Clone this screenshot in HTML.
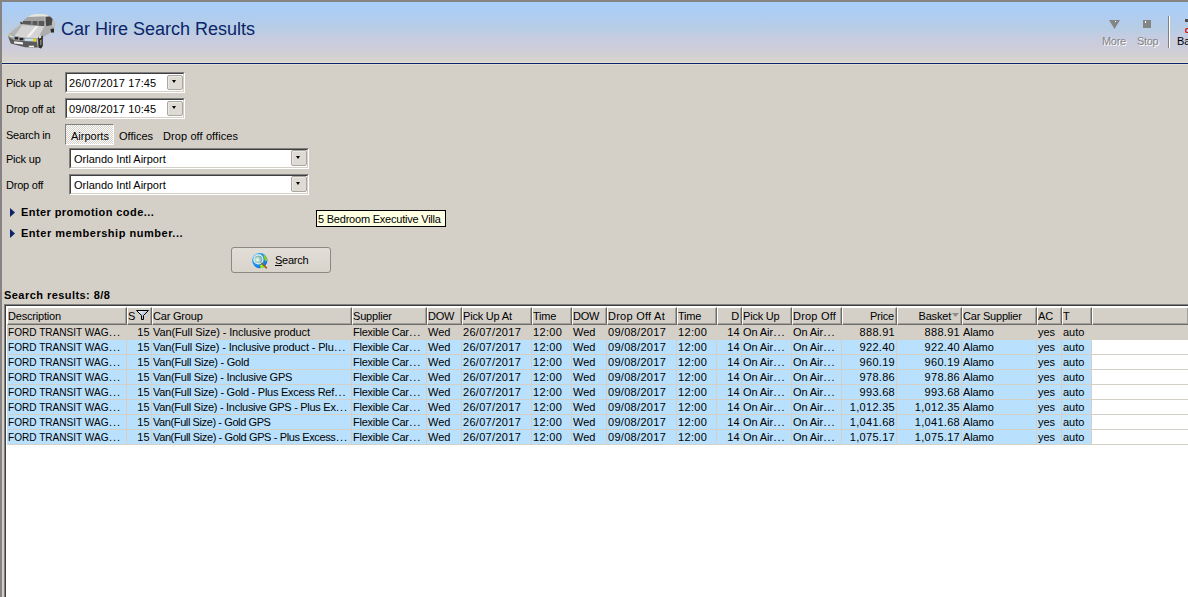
<!DOCTYPE html><html><head><meta charset="utf-8"><style>
*{margin:0;padding:0;box-sizing:border-box}
html,body{width:1188px;height:597px;overflow:hidden;background:#d4d0c8}
body{position:relative;font-family:"Liberation Sans",sans-serif;font-size:11px;color:#000}
.a{position:absolute;white-space:pre}
#hdr{position:absolute;left:2px;top:2px;width:1186px;height:60px;
 background:linear-gradient(#a8cefa 0%,#b0cdf0 25%,#b9cde3 47%,#c5cce2 58%,#cfcdd8 80%,#d8d4cc 100%)}
.lbl{position:absolute;white-space:pre;line-height:13px}
.box{position:absolute;background:#fff;border-top:1px solid #808080;border-left:1px solid #808080;border-right:1px solid #fff;border-bottom:1px solid #fff}
.box .in{position:absolute;left:0;top:0;right:0;bottom:0;border-top:1px solid #404040;border-left:1px solid #404040;border-right:1px solid #d4d0c8;border-bottom:1px solid #d4d0c8}
.dd{position:absolute;width:16px;height:15px;border-radius:2px;background:#dedad4;border:1px solid #aaa6a0;box-shadow:inset 1px 1px 0 #ece9e4}
.dd:after{content:"";position:absolute;left:4px;top:4px;border-left:2.5px solid transparent;border-right:2.5px solid transparent;border-top:3px solid #000}
.dd.tall:after{top:5px}
.hc{position:absolute;top:307px;height:18px;background:#d4d0c8;border-top:1px solid #fff;border-left:1px solid #fff;border-right:1px solid #6e6c66;border-bottom:1px solid #6e6c66;box-shadow:inset -1px -1px 0 #a3a19b;line-height:15px;padding-top:1px;white-space:pre;overflow:hidden;letter-spacing:-0.2px}
.c{position:absolute;height:14px;line-height:14px;white-space:pre;overflow:hidden;padding:0 1px}
.el{letter-spacing:0.95px;margin-left:0.5px}
</style></head><body>
<div id="hdr"></div>
<div class="a" style="left:0;top:0;width:1188px;height:2px;background:#878383"></div>
<div class="a" style="left:0;top:0;width:2px;height:597px;background:#878383"></div>
<div class="a" style="left:2px;top:62px;width:1186px;height:1px;background:#e4e0d8"></div>
<div class="a" style="left:2px;top:63px;width:1186px;height:1px;background:#0a246a"></div>
<div class="a" style="left:2px;top:64px;width:1186px;height:1px;background:#e2ded4"></div>
<svg class="a" style="left:5px;top:10px" width="55" height="42" viewBox="5 10 55 42">
<path d="M8.2 36.5 L9 34 L13 30.5 L18 26.5 L20.5 22.3 L22 22.5 L27.7 17 L31.2 15.1 L35 14.1 L43.9 14.1 L48.9 15.5 L52 17.5 L54 20 L55.5 23 L54.5 28.6 L54 32.4 L50.5 32.5 L44 36.5 L42.8 40 L42.5 47 L41 48.6 L38 48 L37.7 47.5 L25.2 47.2 L10.8 43.5 Z" fill="#bdbdbd"/>
<path d="M31.2 15.1 L35 14.1 L43.9 14.1 L48.9 15.5 L44.3 16.6 L27.7 17 Z" fill="#e6e6e0"/>
<path d="M24.2 19.7 L27.7 17 L44.3 16.6 L44.3 20.9 L23 21.5 Z" fill="#a4a4a4"/>
<path d="M21.9 24 L23 21 L44.3 20.9 L44.3 26.3 Z" fill="#585858"/>
<path d="M31 21 L33 21 L32.5 25.5 L30.5 25.4 Z" fill="#858585"/>
<path d="M37 21 L39 21 L38.8 25.9 L36.8 25.8 Z" fill="#858585"/>
<path d="M20 21.8 L21.5 22 L22.3 24 L21 24.2 Z" fill="#303030"/>
<path d="M45.5 17 L50 16.5 L52.5 19 L51.6 25.5 L46 26.3 Z" fill="#484848"/>
<path d="M44.3 26.3 L51.6 25.5 L54.5 28.6 L50.5 32.5 L44 36.5 L38 38 Z" fill="#adadad"/>
<path d="M9 34 L18 26.5 L22 25.5 L14.8 35.7 Z" fill="#b4b4b4"/>
<path d="M14.8 35.7 L22 25.5 L44.3 26.3 L38 38 L25.2 37.6 Z" fill="#d4d4d4"/>
<path d="M26 37.6 L35.8 26 L38.6 26.1 L29 37.7 Z" fill="#f2f2f2"/>
<path d="M14.8 35.7 L25.2 37.6 L38 38" stroke="#f4f4f4" stroke-width="0.9" fill="none"/>
<path d="M8.2 36.5 L9 34 L14.8 35.7 L25.2 37.6 L38 38 L37 42 L14.1 40.2 Z" fill="#9c9c9c"/>
<path d="M8.2 36.8 L14.1 40.2 L37 42 L37.7 47.5 L25.2 47.2 L10.8 43.5 Z" fill="#5a5a5a"/>
<path d="M10 35 L14.1 36.2 L14.1 37.6 L10 37 Z" fill="#c0e0f0"/>
<rect x="9" y="34" width="1.2" height="2" fill="#d8d050"/>
<rect x="14.8" y="37.2" width="3.4" height="2.2" fill="#202020"/>
<rect x="19.6" y="38" width="3.7" height="2.2" fill="#202020"/>
<rect x="24.8" y="38.7" width="8.5" height="2.2" fill="#c4e4f8"/>
<rect x="33.3" y="38.7" width="2.9" height="2.6" fill="#f0d800"/>
<path d="M14.1 41.3 L23 42.2 L23 44.6 L14.1 43.6 Z" fill="#f0f0f0"/>
<rect x="28.8" y="45.7" width="5.2" height="1.5" fill="#f0f0f0"/>
<path d="M38 37 L42.8 35.4 L42.8 46 L41 48.6 L38.5 47.5 Z" fill="#2c2c2c"/>
<path d="M38.6 36 L41.5 35.2 L41 38 L38.8 38.5 Z" fill="#e0e0e0"/>
<path d="M40 40 L41.6 39.5 L41.4 45 L40.2 45.5 Z" fill="#8a8a8a"/>
<path d="M50.5 29 L54 28.6 L54 32.4 L51 32.5 Z" fill="#2c2c2c"/>
</svg>
<div class="a" style="left:61px;top:18px;font-size:18px;line-height:22px;color:#0a246a">Car Hire Search Results</div>
<svg class="a" style="left:1109px;top:20px" width="11" height="9"><path d="M0 0 H11 L5.5 9 Z" fill="#858585"/><rect x="6" y="1" width="1" height="1" fill="#fff"/></svg>
<div class="a" style="left:1143px;top:20px;width:8px;height:8px;background:#858585"></div>
<div class="a" style="left:1145px;top:21px;width:1px;height:2px;background:#fff"></div>
<div class="a" style="left:1102px;top:35px;line-height:13px;color:#858585;letter-spacing:-0.3px;text-shadow:1px 1px 0 #fff">More</div>
<div class="a" style="left:1137px;top:35px;line-height:13px;color:#858585;letter-spacing:-0.3px;text-shadow:1px 1px 0 #fff">Stop</div>
<div class="a" style="left:1168px;top:16px;width:1px;height:32px;background:#808080"></div>
<div class="a" style="left:1169px;top:16px;width:1px;height:32px;background:#fff"></div>
<div class="a" style="left:1177px;top:35px;line-height:13px">Ba</div>
<div class="a" style="left:1185px;top:19px;width:3px;height:3px;background:#505050"></div>
<div class="a" style="left:1185px;top:28px;width:3px;height:5px;border:1px solid #e00000;border-right:none;border-radius:3px 0 0 3px"></div>
<div class="lbl" style="left:6px;top:77px;letter-spacing:-0.22px">Pick up at</div>
<div class="lbl" style="left:6px;top:103px;letter-spacing:-0.22px">Drop off at</div>
<div class="lbl" style="left:6px;top:129px;letter-spacing:-0.22px">Search in</div>
<div class="lbl" style="left:6px;top:153px;letter-spacing:-0.22px">Pick up</div>
<div class="lbl" style="left:6px;top:179px;letter-spacing:-0.22px">Drop off</div>
<div class="box" style="left:65px;top:72px;width:120px;height:21px"><div class="in"></div></div>
<div class="lbl" style="left:69px;top:77px;letter-spacing:0.1px">26/07/2017 17:45</div>
<div class="dd" style="left:167px;top:75px;height:15px"></div>
<div class="box" style="left:65px;top:98px;width:120px;height:21px"><div class="in"></div></div>
<div class="lbl" style="left:69px;top:103px;letter-spacing:0.1px">09/08/2017 10:45</div>
<div class="dd" style="left:167px;top:101px;height:15px"></div>
<div class="box" style="left:69px;top:148px;width:240px;height:21px"><div class="in"></div></div>
<div class="lbl" style="left:74px;top:153px;letter-spacing:0px">Orlando Intl Airport</div>
<div class="dd tall" style="left:291px;top:150px;height:16px"></div>
<div class="box" style="left:69px;top:174px;width:240px;height:21px"><div class="in"></div></div>
<div class="lbl" style="left:74px;top:179px;letter-spacing:0px">Orlando Intl Airport</div>
<div class="dd tall" style="left:291px;top:176px;height:16px"></div>
<div class="a" style="left:65px;top:124px;width:49px;height:21px;background:repeating-conic-gradient(#ffffff 0 25%,#d4d0c8 0 50%) 0 0/2px 2px;border-top:1px solid #808080;border-left:1px solid #808080;border-right:1px solid #fff;border-bottom:1px solid #fff"></div>
<div class="lbl" style="left:71px;top:130px;">Airports</div>
<div class="lbl" style="left:119px;top:130px;">Offices</div>
<div class="lbl" style="left:163px;top:130px;letter-spacing:0.1px">Drop off offices</div>
<svg class="a" style="left:10px;top:208px" width="5" height="9"><path d="M0 0 L5 4.5 L0 9Z" fill="#0a246a"/></svg>
<svg class="a" style="left:10px;top:229px" width="5" height="9"><path d="M0 0 L5 4.5 L0 9Z" fill="#0a246a"/></svg>
<div class="lbl" style="left:21px;top:206px;font-weight:bold;letter-spacing:0.42px">Enter promotion code...</div>
<div class="lbl" style="left:21px;top:227px;font-weight:bold;letter-spacing:0.52px">Enter membership number...</div>
<div class="a" style="left:316px;top:210px;width:130px;height:17px;background:#ffffe1;border:1px solid #000"></div>
<div class="lbl" style="left:318px;top:213px;letter-spacing:-0.22px">5 Bedroom Executive Villa</div>
<div class="a" style="left:231px;top:247px;width:100px;height:26px;border:1px solid #8c8984;border-radius:3px;background:linear-gradient(#e2ded8,#d8d4cc)"></div>
<svg class="a" style="left:251px;top:252px" width="18" height="18" viewBox="251 252 18 18">
<defs><radialGradient id="gb" cx="0.35" cy="0.35" r="0.7"><stop offset="0" stop-color="#40d0ff"/><stop offset="1" stop-color="#0a6ae0"/></radialGradient>
<radialGradient id="gl" cx="0.4" cy="0.55" r="0.6"><stop offset="0" stop-color="#ffffff"/><stop offset="0.4" stop-color="#b0d8c8"/><stop offset="1" stop-color="#5a9aa0"/></radialGradient></defs>
<circle cx="259.8" cy="260.6" r="7.6" fill="url(#gb)"/>
<path d="M263.5 254.2 Q267 256.5 267.4 260.5 L265.5 261.5 L264 258 Z" fill="#8ad020"/>
<path d="M260 265.5 L263 263.5 L265 266.5 Q262.5 268.2 260.5 268 Z" fill="#a0f010"/>
<circle cx="258.4" cy="259.4" r="4.5" fill="url(#gl)" stroke="#f8fafa" stroke-width="1.1"/>
<path d="M261.5 263 L266.8 268.4" stroke="#a0581c" stroke-width="1.7"/></svg>
<div class="lbl" style="left:275px;top:254px;letter-spacing:-0.25px"><u>S</u>earch</div>
<div class="lbl" style="left:4px;top:289px;font-weight:bold;letter-spacing:0.45px">Search results: 8/8</div>
<div class="a" style="left:4px;top:304px;width:1184px;height:293px;background:#fff;border-top:1px solid #808080;border-left:1px solid #808080"></div>
<div class="a" style="left:5px;top:305px;width:1183px;height:292px;border-top:1px solid #404040;border-left:1px solid #404040"></div>
<div class="hc" style="left:7px;width:120px;padding-left:0px;">Description</div>
<div class="hc" style="left:127px;width:25px;padding-left:0px;">S</div>
<div class="hc" style="left:152px;width:200px;padding-left:0px;">Car Group</div>
<div class="hc" style="left:352px;width:75px;padding-left:0px;">Supplier</div>
<div class="hc" style="left:427px;width:35px;padding-left:0px;">DOW</div>
<div class="hc" style="left:462px;width:70px;padding-left:0px;">Pick Up At</div>
<div class="hc" style="left:532px;width:40px;padding-left:0px;">Time</div>
<div class="hc" style="left:572px;width:35px;padding-left:0px;">DOW</div>
<div class="hc" style="left:607px;width:70px;letter-spacing:0.25px;padding-left:0px;">Drop Off At</div>
<div class="hc" style="left:677px;width:40px;padding-left:0px;">Time</div>
<div class="hc" style="left:717px;width:25px;text-align:right;padding-right:2px;">D</div>
<div class="hc" style="left:742px;width:50px;padding-left:0px;">Pick Up</div>
<div class="hc" style="left:792px;width:50px;letter-spacing:0.2px;padding-left:0px;">Drop Off</div>
<div class="hc" style="left:842px;width:55px;text-align:right;padding-right:2px;">Price</div>
<div class="hc" style="left:897px;width:65px;text-align:right;padding-right:10px;">Basket</div>
<div class="hc" style="left:962px;width:75px;padding-left:0px;">Car Supplier</div>
<div class="hc" style="left:1037px;width:25px;padding-left:0px;">AC</div>
<div class="hc" style="left:1062px;width:30px;padding-left:0px;">T</div>
<div class="hc" style="left:1092px;width:96px;border-right:none"></div>
<svg class="a" style="left:135px;top:309px" width="16" height="13" viewBox="135 309 16 13">
<defs><linearGradient id="fg" x1="0" y1="0" x2="1" y2="1"><stop offset="0" stop-color="#ffffff"/><stop offset="1" stop-color="#7898c8"/></linearGradient></defs>
<path d="M136.5 310.5 H148.5 L143.5 315.5 V319.5 H141.5 V315.5 Z" fill="url(#fg)" stroke="#000" stroke-width="1"/></svg>
<svg class="a" style="left:952px;top:313px" width="7" height="4"><path d="M0 0 H7 L3.5 4 Z" fill="#8c8c8c"/></svg>
<div class="a" style="left:7px;top:325px;width:1181px;height:15px;background:#d4d0c8"></div>
<div class="c" style="left:7px;top:325px;width:119px;background:#d4d0c8;letter-spacing:0px;"><span style="display:inline-block;transform:scaleX(0.915);transform-origin:0 0;margin-right:-9.3px">FORD TRANSIT WAG</span><span class="el">...</span></div>
<div class="c" style="left:127px;top:325px;width:24px;background:#d4d0c8;letter-spacing:0.3px;text-align:right;">15</div>
<div class="c" style="left:152px;top:325px;width:199px;background:#d4d0c8;letter-spacing:-0.11px;">Van(Full Size) - Inclusive product</div>
<div class="c" style="left:352px;top:325px;width:74px;background:#d4d0c8;letter-spacing:-0.25px;">Flexible Car<span class="el">...</span></div>
<div class="c" style="left:427px;top:325px;width:34px;background:#d4d0c8;letter-spacing:0px;">Wed</div>
<div class="c" style="left:462px;top:325px;width:69px;background:#d4d0c8;letter-spacing:0.3px;">26/07/2017</div>
<div class="c" style="left:532px;top:325px;width:39px;background:#d4d0c8;letter-spacing:0.35px;">12:00</div>
<div class="c" style="left:572px;top:325px;width:34px;background:#d4d0c8;letter-spacing:0px;">Wed</div>
<div class="c" style="left:607px;top:325px;width:69px;background:#d4d0c8;letter-spacing:0.3px;">09/08/2017</div>
<div class="c" style="left:677px;top:325px;width:39px;background:#d4d0c8;letter-spacing:0.35px;">12:00</div>
<div class="c" style="left:717px;top:325px;width:24px;background:#d4d0c8;letter-spacing:0.3px;text-align:right;">14</div>
<div class="c" style="left:742px;top:325px;width:49px;background:#d4d0c8;letter-spacing:-0.1px;">On Air<span class="el">...</span></div>
<div class="c" style="left:792px;top:325px;width:49px;background:#d4d0c8;letter-spacing:-0.1px;">On Air<span class="el">...</span></div>
<div class="c" style="left:842px;top:325px;width:54px;background:#d4d0c8;letter-spacing:0.3px;text-align:right;">888.91</div>
<div class="c" style="left:897px;top:325px;width:64px;background:#d4d0c8;letter-spacing:0.3px;text-align:right;">888.91</div>
<div class="c" style="left:962px;top:325px;width:74px;background:#d4d0c8;letter-spacing:-0.1px;">Alamo</div>
<div class="c" style="left:1037px;top:325px;width:24px;background:#d4d0c8;letter-spacing:0px;">yes</div>
<div class="c" style="left:1062px;top:325px;width:29px;background:#d4d0c8;letter-spacing:0px;">auto</div>
<div class="a" style="left:7px;top:340px;width:1085px;height:15px;background:#d4d0c8"></div>
<div class="a" style="left:1092px;top:354px;width:96px;height:1px;background:#d4d0c8"></div>
<div class="c" style="left:7px;top:340px;width:119px;background:#b9e0fc;letter-spacing:0px;"><span style="display:inline-block;transform:scaleX(0.915);transform-origin:0 0;margin-right:-9.3px">FORD TRANSIT WAG</span><span class="el">...</span></div>
<div class="c" style="left:127px;top:340px;width:24px;background:#b9e0fc;letter-spacing:0.3px;text-align:right;">15</div>
<div class="c" style="left:152px;top:340px;width:199px;background:#b9e0fc;letter-spacing:-0.14px;">Van(Full Size) - Inclusive product - Plu<span class="el">...</span></div>
<div class="c" style="left:352px;top:340px;width:74px;background:#b9e0fc;letter-spacing:-0.25px;">Flexible Car<span class="el">...</span></div>
<div class="c" style="left:427px;top:340px;width:34px;background:#b9e0fc;letter-spacing:0px;">Wed</div>
<div class="c" style="left:462px;top:340px;width:69px;background:#b9e0fc;letter-spacing:0.3px;">26/07/2017</div>
<div class="c" style="left:532px;top:340px;width:39px;background:#b9e0fc;letter-spacing:0.35px;">12:00</div>
<div class="c" style="left:572px;top:340px;width:34px;background:#b9e0fc;letter-spacing:0px;">Wed</div>
<div class="c" style="left:607px;top:340px;width:69px;background:#b9e0fc;letter-spacing:0.3px;">09/08/2017</div>
<div class="c" style="left:677px;top:340px;width:39px;background:#b9e0fc;letter-spacing:0.35px;">12:00</div>
<div class="c" style="left:717px;top:340px;width:24px;background:#b9e0fc;letter-spacing:0.3px;text-align:right;">14</div>
<div class="c" style="left:742px;top:340px;width:49px;background:#b9e0fc;letter-spacing:-0.1px;">On Air<span class="el">...</span></div>
<div class="c" style="left:792px;top:340px;width:49px;background:#b9e0fc;letter-spacing:-0.1px;">On Air<span class="el">...</span></div>
<div class="c" style="left:842px;top:340px;width:54px;background:#b9e0fc;letter-spacing:0.3px;text-align:right;">922.40</div>
<div class="c" style="left:897px;top:340px;width:64px;background:#b9e0fc;letter-spacing:0.3px;text-align:right;">922.40</div>
<div class="c" style="left:962px;top:340px;width:74px;background:#b9e0fc;letter-spacing:-0.1px;">Alamo</div>
<div class="c" style="left:1037px;top:340px;width:24px;background:#b9e0fc;letter-spacing:0px;">yes</div>
<div class="c" style="left:1062px;top:340px;width:29px;background:#b9e0fc;letter-spacing:0px;">auto</div>
<div class="a" style="left:7px;top:355px;width:1085px;height:15px;background:#d4d0c8"></div>
<div class="a" style="left:1092px;top:369px;width:96px;height:1px;background:#d4d0c8"></div>
<div class="c" style="left:7px;top:355px;width:119px;background:#b9e0fc;letter-spacing:0px;"><span style="display:inline-block;transform:scaleX(0.915);transform-origin:0 0;margin-right:-9.3px">FORD TRANSIT WAG</span><span class="el">...</span></div>
<div class="c" style="left:127px;top:355px;width:24px;background:#b9e0fc;letter-spacing:0.3px;text-align:right;">15</div>
<div class="c" style="left:152px;top:355px;width:199px;background:#b9e0fc;letter-spacing:-0.25px;">Van(Full Size) - Gold</div>
<div class="c" style="left:352px;top:355px;width:74px;background:#b9e0fc;letter-spacing:-0.25px;">Flexible Car<span class="el">...</span></div>
<div class="c" style="left:427px;top:355px;width:34px;background:#b9e0fc;letter-spacing:0px;">Wed</div>
<div class="c" style="left:462px;top:355px;width:69px;background:#b9e0fc;letter-spacing:0.3px;">26/07/2017</div>
<div class="c" style="left:532px;top:355px;width:39px;background:#b9e0fc;letter-spacing:0.35px;">12:00</div>
<div class="c" style="left:572px;top:355px;width:34px;background:#b9e0fc;letter-spacing:0px;">Wed</div>
<div class="c" style="left:607px;top:355px;width:69px;background:#b9e0fc;letter-spacing:0.3px;">09/08/2017</div>
<div class="c" style="left:677px;top:355px;width:39px;background:#b9e0fc;letter-spacing:0.35px;">12:00</div>
<div class="c" style="left:717px;top:355px;width:24px;background:#b9e0fc;letter-spacing:0.3px;text-align:right;">14</div>
<div class="c" style="left:742px;top:355px;width:49px;background:#b9e0fc;letter-spacing:-0.1px;">On Air<span class="el">...</span></div>
<div class="c" style="left:792px;top:355px;width:49px;background:#b9e0fc;letter-spacing:-0.1px;">On Air<span class="el">...</span></div>
<div class="c" style="left:842px;top:355px;width:54px;background:#b9e0fc;letter-spacing:0.3px;text-align:right;">960.19</div>
<div class="c" style="left:897px;top:355px;width:64px;background:#b9e0fc;letter-spacing:0.3px;text-align:right;">960.19</div>
<div class="c" style="left:962px;top:355px;width:74px;background:#b9e0fc;letter-spacing:-0.1px;">Alamo</div>
<div class="c" style="left:1037px;top:355px;width:24px;background:#b9e0fc;letter-spacing:0px;">yes</div>
<div class="c" style="left:1062px;top:355px;width:29px;background:#b9e0fc;letter-spacing:0px;">auto</div>
<div class="a" style="left:7px;top:370px;width:1085px;height:15px;background:#d4d0c8"></div>
<div class="a" style="left:1092px;top:384px;width:96px;height:1px;background:#d4d0c8"></div>
<div class="c" style="left:7px;top:370px;width:119px;background:#b9e0fc;letter-spacing:0px;"><span style="display:inline-block;transform:scaleX(0.915);transform-origin:0 0;margin-right:-9.3px">FORD TRANSIT WAG</span><span class="el">...</span></div>
<div class="c" style="left:127px;top:370px;width:24px;background:#b9e0fc;letter-spacing:0.3px;text-align:right;">15</div>
<div class="c" style="left:152px;top:370px;width:199px;background:#b9e0fc;letter-spacing:-0.27px;">Van(Full Size) - Inclusive GPS</div>
<div class="c" style="left:352px;top:370px;width:74px;background:#b9e0fc;letter-spacing:-0.25px;">Flexible Car<span class="el">...</span></div>
<div class="c" style="left:427px;top:370px;width:34px;background:#b9e0fc;letter-spacing:0px;">Wed</div>
<div class="c" style="left:462px;top:370px;width:69px;background:#b9e0fc;letter-spacing:0.3px;">26/07/2017</div>
<div class="c" style="left:532px;top:370px;width:39px;background:#b9e0fc;letter-spacing:0.35px;">12:00</div>
<div class="c" style="left:572px;top:370px;width:34px;background:#b9e0fc;letter-spacing:0px;">Wed</div>
<div class="c" style="left:607px;top:370px;width:69px;background:#b9e0fc;letter-spacing:0.3px;">09/08/2017</div>
<div class="c" style="left:677px;top:370px;width:39px;background:#b9e0fc;letter-spacing:0.35px;">12:00</div>
<div class="c" style="left:717px;top:370px;width:24px;background:#b9e0fc;letter-spacing:0.3px;text-align:right;">14</div>
<div class="c" style="left:742px;top:370px;width:49px;background:#b9e0fc;letter-spacing:-0.1px;">On Air<span class="el">...</span></div>
<div class="c" style="left:792px;top:370px;width:49px;background:#b9e0fc;letter-spacing:-0.1px;">On Air<span class="el">...</span></div>
<div class="c" style="left:842px;top:370px;width:54px;background:#b9e0fc;letter-spacing:0.3px;text-align:right;">978.86</div>
<div class="c" style="left:897px;top:370px;width:64px;background:#b9e0fc;letter-spacing:0.3px;text-align:right;">978.86</div>
<div class="c" style="left:962px;top:370px;width:74px;background:#b9e0fc;letter-spacing:-0.1px;">Alamo</div>
<div class="c" style="left:1037px;top:370px;width:24px;background:#b9e0fc;letter-spacing:0px;">yes</div>
<div class="c" style="left:1062px;top:370px;width:29px;background:#b9e0fc;letter-spacing:0px;">auto</div>
<div class="a" style="left:7px;top:385px;width:1085px;height:15px;background:#d4d0c8"></div>
<div class="a" style="left:1092px;top:399px;width:96px;height:1px;background:#d4d0c8"></div>
<div class="c" style="left:7px;top:385px;width:119px;background:#b9e0fc;letter-spacing:0px;"><span style="display:inline-block;transform:scaleX(0.915);transform-origin:0 0;margin-right:-9.3px">FORD TRANSIT WAG</span><span class="el">...</span></div>
<div class="c" style="left:127px;top:385px;width:24px;background:#b9e0fc;letter-spacing:0.3px;text-align:right;">15</div>
<div class="c" style="left:152px;top:385px;width:199px;background:#b9e0fc;letter-spacing:-0.26px;">Van(Full Size) - Gold - Plus Excess Ref<span class="el">...</span></div>
<div class="c" style="left:352px;top:385px;width:74px;background:#b9e0fc;letter-spacing:-0.25px;">Flexible Car<span class="el">...</span></div>
<div class="c" style="left:427px;top:385px;width:34px;background:#b9e0fc;letter-spacing:0px;">Wed</div>
<div class="c" style="left:462px;top:385px;width:69px;background:#b9e0fc;letter-spacing:0.3px;">26/07/2017</div>
<div class="c" style="left:532px;top:385px;width:39px;background:#b9e0fc;letter-spacing:0.35px;">12:00</div>
<div class="c" style="left:572px;top:385px;width:34px;background:#b9e0fc;letter-spacing:0px;">Wed</div>
<div class="c" style="left:607px;top:385px;width:69px;background:#b9e0fc;letter-spacing:0.3px;">09/08/2017</div>
<div class="c" style="left:677px;top:385px;width:39px;background:#b9e0fc;letter-spacing:0.35px;">12:00</div>
<div class="c" style="left:717px;top:385px;width:24px;background:#b9e0fc;letter-spacing:0.3px;text-align:right;">14</div>
<div class="c" style="left:742px;top:385px;width:49px;background:#b9e0fc;letter-spacing:-0.1px;">On Air<span class="el">...</span></div>
<div class="c" style="left:792px;top:385px;width:49px;background:#b9e0fc;letter-spacing:-0.1px;">On Air<span class="el">...</span></div>
<div class="c" style="left:842px;top:385px;width:54px;background:#b9e0fc;letter-spacing:0.3px;text-align:right;">993.68</div>
<div class="c" style="left:897px;top:385px;width:64px;background:#b9e0fc;letter-spacing:0.3px;text-align:right;">993.68</div>
<div class="c" style="left:962px;top:385px;width:74px;background:#b9e0fc;letter-spacing:-0.1px;">Alamo</div>
<div class="c" style="left:1037px;top:385px;width:24px;background:#b9e0fc;letter-spacing:0px;">yes</div>
<div class="c" style="left:1062px;top:385px;width:29px;background:#b9e0fc;letter-spacing:0px;">auto</div>
<div class="a" style="left:7px;top:400px;width:1085px;height:15px;background:#d4d0c8"></div>
<div class="a" style="left:1092px;top:414px;width:96px;height:1px;background:#d4d0c8"></div>
<div class="c" style="left:7px;top:400px;width:119px;background:#b9e0fc;letter-spacing:0px;"><span style="display:inline-block;transform:scaleX(0.915);transform-origin:0 0;margin-right:-9.3px">FORD TRANSIT WAG</span><span class="el">...</span></div>
<div class="c" style="left:127px;top:400px;width:24px;background:#b9e0fc;letter-spacing:0.3px;text-align:right;">15</div>
<div class="c" style="left:152px;top:400px;width:199px;background:#b9e0fc;letter-spacing:-0.29px;">Van(Full Size) - Inclusive GPS - Plus Ex<span class="el">...</span></div>
<div class="c" style="left:352px;top:400px;width:74px;background:#b9e0fc;letter-spacing:-0.25px;">Flexible Car<span class="el">...</span></div>
<div class="c" style="left:427px;top:400px;width:34px;background:#b9e0fc;letter-spacing:0px;">Wed</div>
<div class="c" style="left:462px;top:400px;width:69px;background:#b9e0fc;letter-spacing:0.3px;">26/07/2017</div>
<div class="c" style="left:532px;top:400px;width:39px;background:#b9e0fc;letter-spacing:0.35px;">12:00</div>
<div class="c" style="left:572px;top:400px;width:34px;background:#b9e0fc;letter-spacing:0px;">Wed</div>
<div class="c" style="left:607px;top:400px;width:69px;background:#b9e0fc;letter-spacing:0.3px;">09/08/2017</div>
<div class="c" style="left:677px;top:400px;width:39px;background:#b9e0fc;letter-spacing:0.35px;">12:00</div>
<div class="c" style="left:717px;top:400px;width:24px;background:#b9e0fc;letter-spacing:0.3px;text-align:right;">14</div>
<div class="c" style="left:742px;top:400px;width:49px;background:#b9e0fc;letter-spacing:-0.1px;">On Air<span class="el">...</span></div>
<div class="c" style="left:792px;top:400px;width:49px;background:#b9e0fc;letter-spacing:-0.1px;">On Air<span class="el">...</span></div>
<div class="c" style="left:842px;top:400px;width:54px;background:#b9e0fc;letter-spacing:0.3px;text-align:right;">1,012.35</div>
<div class="c" style="left:897px;top:400px;width:64px;background:#b9e0fc;letter-spacing:0.3px;text-align:right;">1,012.35</div>
<div class="c" style="left:962px;top:400px;width:74px;background:#b9e0fc;letter-spacing:-0.1px;">Alamo</div>
<div class="c" style="left:1037px;top:400px;width:24px;background:#b9e0fc;letter-spacing:0px;">yes</div>
<div class="c" style="left:1062px;top:400px;width:29px;background:#b9e0fc;letter-spacing:0px;">auto</div>
<div class="a" style="left:7px;top:415px;width:1085px;height:15px;background:#d4d0c8"></div>
<div class="a" style="left:1092px;top:429px;width:96px;height:1px;background:#d4d0c8"></div>
<div class="c" style="left:7px;top:415px;width:119px;background:#b9e0fc;letter-spacing:0px;"><span style="display:inline-block;transform:scaleX(0.915);transform-origin:0 0;margin-right:-9.3px">FORD TRANSIT WAG</span><span class="el">...</span></div>
<div class="c" style="left:127px;top:415px;width:24px;background:#b9e0fc;letter-spacing:0.3px;text-align:right;">15</div>
<div class="c" style="left:152px;top:415px;width:199px;background:#b9e0fc;letter-spacing:-0.4px;">Van(Full Size) - Gold GPS</div>
<div class="c" style="left:352px;top:415px;width:74px;background:#b9e0fc;letter-spacing:-0.25px;">Flexible Car<span class="el">...</span></div>
<div class="c" style="left:427px;top:415px;width:34px;background:#b9e0fc;letter-spacing:0px;">Wed</div>
<div class="c" style="left:462px;top:415px;width:69px;background:#b9e0fc;letter-spacing:0.3px;">26/07/2017</div>
<div class="c" style="left:532px;top:415px;width:39px;background:#b9e0fc;letter-spacing:0.35px;">12:00</div>
<div class="c" style="left:572px;top:415px;width:34px;background:#b9e0fc;letter-spacing:0px;">Wed</div>
<div class="c" style="left:607px;top:415px;width:69px;background:#b9e0fc;letter-spacing:0.3px;">09/08/2017</div>
<div class="c" style="left:677px;top:415px;width:39px;background:#b9e0fc;letter-spacing:0.35px;">12:00</div>
<div class="c" style="left:717px;top:415px;width:24px;background:#b9e0fc;letter-spacing:0.3px;text-align:right;">14</div>
<div class="c" style="left:742px;top:415px;width:49px;background:#b9e0fc;letter-spacing:-0.1px;">On Air<span class="el">...</span></div>
<div class="c" style="left:792px;top:415px;width:49px;background:#b9e0fc;letter-spacing:-0.1px;">On Air<span class="el">...</span></div>
<div class="c" style="left:842px;top:415px;width:54px;background:#b9e0fc;letter-spacing:0.3px;text-align:right;">1,041.68</div>
<div class="c" style="left:897px;top:415px;width:64px;background:#b9e0fc;letter-spacing:0.3px;text-align:right;">1,041.68</div>
<div class="c" style="left:962px;top:415px;width:74px;background:#b9e0fc;letter-spacing:-0.1px;">Alamo</div>
<div class="c" style="left:1037px;top:415px;width:24px;background:#b9e0fc;letter-spacing:0px;">yes</div>
<div class="c" style="left:1062px;top:415px;width:29px;background:#b9e0fc;letter-spacing:0px;">auto</div>
<div class="a" style="left:7px;top:430px;width:1085px;height:15px;background:#d4d0c8"></div>
<div class="a" style="left:1092px;top:444px;width:96px;height:1px;background:#d4d0c8"></div>
<div class="c" style="left:7px;top:430px;width:119px;background:#b9e0fc;letter-spacing:0px;"><span style="display:inline-block;transform:scaleX(0.915);transform-origin:0 0;margin-right:-9.3px">FORD TRANSIT WAG</span><span class="el">...</span></div>
<div class="c" style="left:127px;top:430px;width:24px;background:#b9e0fc;letter-spacing:0.3px;text-align:right;">15</div>
<div class="c" style="left:152px;top:430px;width:199px;background:#b9e0fc;letter-spacing:-0.38px;">Van(Full Size) - Gold GPS - Plus Excess<span class="el">...</span></div>
<div class="c" style="left:352px;top:430px;width:74px;background:#b9e0fc;letter-spacing:-0.25px;">Flexible Car<span class="el">...</span></div>
<div class="c" style="left:427px;top:430px;width:34px;background:#b9e0fc;letter-spacing:0px;">Wed</div>
<div class="c" style="left:462px;top:430px;width:69px;background:#b9e0fc;letter-spacing:0.3px;">26/07/2017</div>
<div class="c" style="left:532px;top:430px;width:39px;background:#b9e0fc;letter-spacing:0.35px;">12:00</div>
<div class="c" style="left:572px;top:430px;width:34px;background:#b9e0fc;letter-spacing:0px;">Wed</div>
<div class="c" style="left:607px;top:430px;width:69px;background:#b9e0fc;letter-spacing:0.3px;">09/08/2017</div>
<div class="c" style="left:677px;top:430px;width:39px;background:#b9e0fc;letter-spacing:0.35px;">12:00</div>
<div class="c" style="left:717px;top:430px;width:24px;background:#b9e0fc;letter-spacing:0.3px;text-align:right;">14</div>
<div class="c" style="left:742px;top:430px;width:49px;background:#b9e0fc;letter-spacing:-0.1px;">On Air<span class="el">...</span></div>
<div class="c" style="left:792px;top:430px;width:49px;background:#b9e0fc;letter-spacing:-0.1px;">On Air<span class="el">...</span></div>
<div class="c" style="left:842px;top:430px;width:54px;background:#b9e0fc;letter-spacing:0.3px;text-align:right;">1,075.17</div>
<div class="c" style="left:897px;top:430px;width:64px;background:#b9e0fc;letter-spacing:0.3px;text-align:right;">1,075.17</div>
<div class="c" style="left:962px;top:430px;width:74px;background:#b9e0fc;letter-spacing:-0.1px;">Alamo</div>
<div class="c" style="left:1037px;top:430px;width:24px;background:#b9e0fc;letter-spacing:0px;">yes</div>
<div class="c" style="left:1062px;top:430px;width:29px;background:#b9e0fc;letter-spacing:0px;">auto</div>
</body></html>
